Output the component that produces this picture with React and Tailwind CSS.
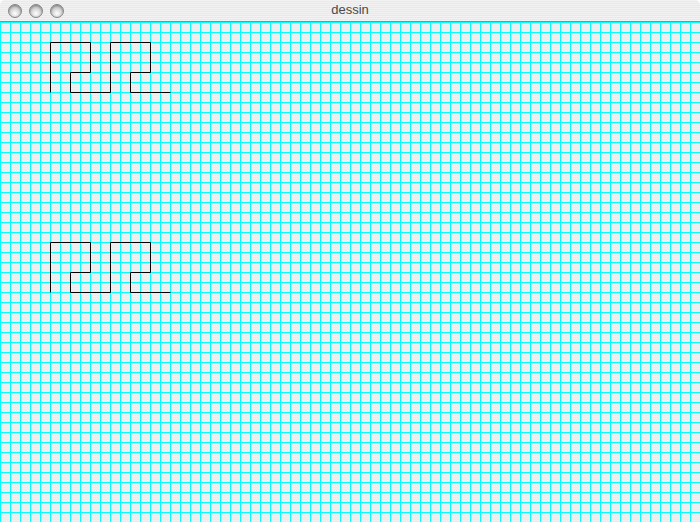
import React from 'react';

const shapes = [0, 200];

const TrafficLight = () => (
  <span className="block w-[14px] h-[14px] rounded-full border border-[#858585] bg-[radial-gradient(circle_at_50%_70%,#ffffff_0%,#d6d6d6_45%,#a4a4a4_100%)] shadow-[inset_0_1px_2px_rgba(0,0,0,0.3)]" />
);

const App = () => {
  return (
    <div className="w-[700px] h-[522px] flex flex-col overflow-hidden bg-white font-['Liberation_Sans',Arial,sans-serif]">
      {/* Title bar */}
      <div className="relative h-[22px] flex-shrink-0 flex items-center gap-[7px] pl-[8px] rounded-t-[5px] border-b border-[#8c8c8c] bg-[repeating-linear-gradient(180deg,#f2f2f2_0px,#f2f2f2_1px,#e9e9e9_1px,#e9e9e9_2px)]">
        <TrafficLight />
        <TrafficLight />
        <TrafficLight />
        <span className="absolute left-0 right-0 top-[2px] text-center text-[13px] leading-[16px] text-[#4a4a4a]">
          dessin
        </span>
      </div>

      {/* Drawing canvas */}
      <div className="flex-1 bg-[repeating-linear-gradient(180deg,#f0f0f0_0px,#f0f0f0_1px,#ececec_1px,#ececec_2px)]">
        <svg width="700" height="500" className="block">
          <defs>
            <pattern id="grid" width="10" height="10" patternUnits="userSpaceOnUse">
              <path d="M0 0.5H10M0.5 0V10" stroke="#00ffff" strokeWidth="1" fill="none" />
            </pattern>
          </defs>
          <rect width="700" height="500" fill="url(#grid)" />
          {shapes.map((dy) => (
            <path
              key={dy}
              transform={`translate(0 ${dy})`}
              d="M50.5 70.5V20.5H90.5V50.5H70.5V70.5H110.5V20.5H150.5V50.5H130.5V70.5H170.5"
              stroke="#000"
              strokeWidth="1"
              fill="none"
            />
          ))}
        </svg>
      </div>
    </div>
  );
};

export default App;
